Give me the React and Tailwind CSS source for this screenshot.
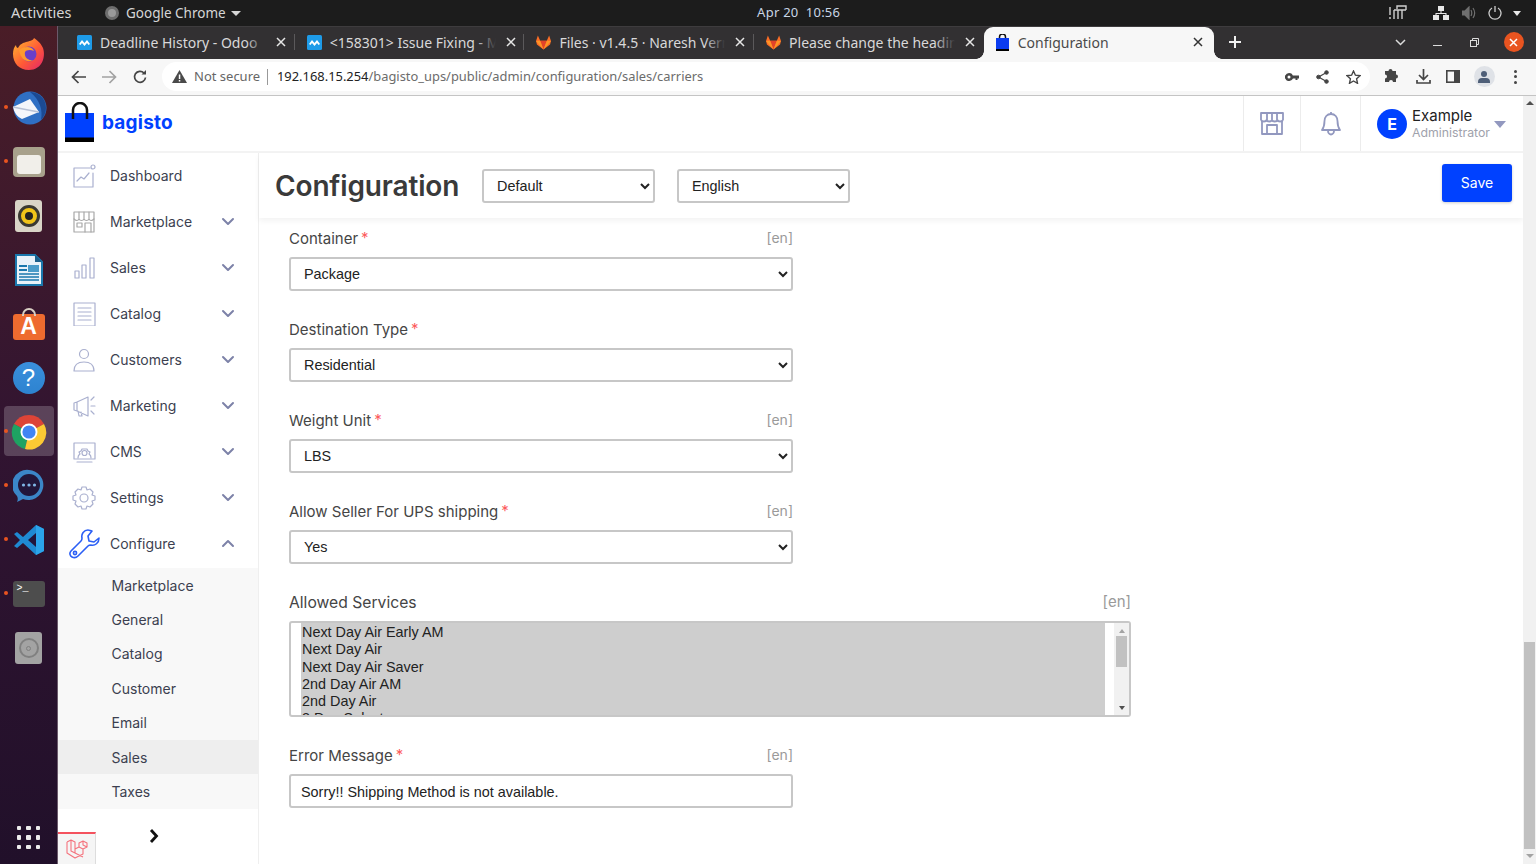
import React from "react";

// ───────────────────────────────────────────────────────────────────────────────
// small icons

const Chev = ({ up }) => (
  <svg width="14" height="9" viewBox="0 0 14 9" fill="none" stroke="#7d82a8" strokeWidth="2" strokeLinecap="round" strokeLinejoin="round">
    <path d={up ? "M2 7l5-5 5 5" : "M2 2l5 5 5-5"} />
  </svg>
);

const Side = ({ children, size = 24 }) => (
  <svg width={size} height={size} viewBox="0 0 24 24" fill="none" stroke="#aab0cf" strokeWidth="1.2" strokeLinejoin="round" strokeLinecap="round">
    {children}
  </svg>
);

const sideIcons = {
  Dashboard: (
    <Side>
      <path d="M18 4H2v19h19V9" />
      <circle cx="21" cy="3" r="2" />
      <path d="M5 17l4-4 3 2 5-6" />
    </Side>
  ),
  Marketplace: (
    <Side>
      <path d="M2 9V2h20v7M2 9v13h20V9" stroke="#a8a8a8" />
      <path d="M2 9c2 2 4 2 5 0 1 2 4 2 5 0 1 2 4 2 5 0 1 2 3 2 5 0M7 2v7M12 2v7M17 2v7" stroke="#a8a8a8" />
      <rect x="5" y="13" width="5" height="4" stroke="#a8a8a8" />
      <path d="M13 22v-9h6v9" stroke="#a8a8a8" />
    </Side>
  ),
  Sales: (
    <Side>
      <rect x="3" y="15" width="4" height="7" />
      <rect x="10" y="9" width="4" height="13" />
      <rect x="18" y="2" width="4" height="20" />
    </Side>
  ),
  Catalog: (
    <Side>
      <rect x="2" y="1" width="21" height="23" />
      <path d="M6 6h13M6 10h13M6 14h13M6 18h13" />
    </Side>
  ),
  Customers: (
    <Side>
      <circle cx="12" cy="6" r="4.5" />
      <path d="M2 23c0-6 4-9 10-9s10 3 10 9z" />
    </Side>
  ),
  Marketing: (
    <Side>
      <path d="M2 9v7l3 1V8zM5 8l11-5v19L5 17M6 17l1 5h3l-1-4" />
      <path d="M19 6l3-3M19 12h4M19 17l3 3" />
    </Side>
  ),
  CMS: (
    <Side>
      <rect x="2" y="3" width="21" height="16" />
      <circle cx="12.5" cy="13" r="2.5" />
      <path d="M6 18c0-3 1-3 2-4l-1-2 2-1 1-2h5l1 2 2 1-1 2c1 1 2 1 2 4M5 22h15" />
    </Side>
  ),
  Settings: (
    <Side>
      <circle cx="12" cy="12" r="4" />
      <path d="M10 1h4l1 3 3-1 3 3-1 3 3 1v4l-3 1 1 3-3 3-3-1-1 3h-4l-1-3-3 1-3-3 1-3-3-1v-4l3-1-1-3 3-3 3 1z" />
    </Side>
  ),
  Configure: (
    <svg width="31" height="30" viewBox="0 0 31 30" fill="none" stroke="#2b5ff5" strokeWidth="1.6" strokeLinejoin="round">
      <path d="M19 1c-4 0-7 4-6 8 0 1 0 2-1 3L2 22c-2 2-1 5 1 6s4 1 6-1l10-10c1-1 2-1 3-1 4 1 8-2 8-7l-5 4-5-1-1-5 4-5c-1 0-3-1-4-1z" />
      <circle cx="6" cy="24" r="1.6" />
    </svg>
  ),
};

// dock pictures, rough on purpose, they are about 36px on screen
const dockIcons = [
  <svg key="ff" width="34" height="34" viewBox="0 0 34 34">
    <defs>
      <linearGradient id="ffg" x1="0" y1="0" x2="1" y2="1"><stop offset="0" stopColor="#ffbd2e" /><stop offset=".55" stopColor="#ff5a36" /><stop offset="1" stopColor="#e3256b" /></linearGradient>
    </defs>
    <path d="M22 1c4 3 6 4 9 10 3 9-1 22-14 22C7 33 1 26 1 17c0-4 1-7 3-9 0 2 1 3 2 3 2-4 5-5 8-6 3-1 7-1 8-4z" fill="url(#ffg)" />
    <circle cx="17" cy="17" r="7.5" fill="#6a3fc8" />
    <path d="M7 13c5-4 13-4 15 1-4-2-8-1-9 1-1 4 2 9 8 8-5 3-12 1-14-10z" fill="#ff9a2e" />
  </svg>,
  <svg key="tb" width="36" height="34" viewBox="0 0 36 34">
    <circle cx="19" cy="17" r="16.5" fill="#2f6fc4" />
    <path d="M19 1c8 0 16 6 16 16 0 5-2 9-5 12 2-10-1-20-11-28z" fill="#1b4a94" />
    <path d="M2 16l17-8 9 13-17 7c-5-2-8-7-9-12z" fill="#f4f6fb" />
    <path d="M2 16l15 3 11 2" fill="none" stroke="#b8c2d6" strokeWidth="1.5" />
  </svg>,
  <div key="fl" className="w-[32px] h-[30px] rounded-[4px] bg-[#a8a18c] flex items-end justify-center pb-[3px]">
    <div className="w-[24px] h-[19px] rounded-[3px] bg-[#f1efea]"></div>
  </div>,
  <div key="rb" className="w-[27px] h-[32px] rounded-[3px] bg-[#d9d5c7] flex items-center justify-center">
    <div className="w-[22px] h-[22px] rounded-full bg-[#f0c419] border-[3px] border-[#3a3a32] flex items-center justify-center">
      <div className="w-[8px] h-[8px] rounded-full bg-[#222]"></div>
    </div>
  </div>,
  <svg key="wr" width="28" height="32" viewBox="0 0 28 32">
    <path d="M1 1h19l7 7v23H1z" fill="#e8f2f9" stroke="#1a78ad" strokeWidth="2" />
    <path d="M20 1l7 7h-7z" fill="#1a5f8a" />
    <rect x="4" y="11" width="8" height="2" fill="#1a78ad" />
    <rect x="4" y="15" width="8" height="2" fill="#1a78ad" />
    <rect x="13" y="11" width="11" height="7" fill="#4a9cc9" />
    <path d="M4 20h20M4 23h20M4 26h20" stroke="#1a78ad" strokeWidth="1.6" />
  </svg>,
  <div key="sw" className="relative w-[32px] h-[26px] mt-[5px] rounded-[3px] bg-[#ee6b2f] flex items-center justify-center">
    <div className="absolute -top-[6px] left-[9px] w-[14px] h-[8px] rounded-t-full border-2 border-b-0 border-[#d9d0c4]"></div>
    <span className="text-white font-bold text-[23px] leading-none [font-family:'Liberation_Sans',sans-serif]">A</span>
  </div>,
  <div key="hp" className="w-[32px] h-[32px] rounded-full bg-gradient-to-b from-[#3a8fdc] to-[#2d83d0] flex items-center justify-center text-white text-[24px] leading-none [font-family:'Liberation_Sans',sans-serif]">?</div>,
  <svg key="ch" width="36" height="36" viewBox="0 0 36 36">
    <path d="M18 18L3 10A17 17 0 0 1 33 10z" fill="#dd4437" />
    <path d="M18 18L3 10A17 17 0 0 0 14 35z" fill="#1ea362" />
    <path d="M18 18L33 10A17 17 0 0 1 14 35z" fill="#fcc934" />
    <circle cx="18" cy="18" r="8.5" fill="#fff" />
    <circle cx="18" cy="18" r="6.6" fill="#4285f4" />
  </svg>,
  <svg key="el" width="32" height="34" viewBox="0 0 32 34">
    <path d="M16 1a15 15 0 1 1-6 29l-6 3c1-2 1-4 0-6A15 15 0 0 1 16 1z" fill="#3b86c8" />
    <circle cx="16" cy="16" r="11" fill="#22163a" />
    <circle cx="10.5" cy="16" r="1.6" fill="#7fb6e6" />
    <circle cx="16" cy="16" r="1.6" fill="#7fb6e6" />
    <circle cx="21.5" cy="16" r="1.6" fill="#7fb6e6" />
  </svg>,
  <svg key="vs" width="32" height="32" viewBox="0 0 32 32">
    <path d="M23 1l8 4v22l-8 4-13-12-6 5-3-2 6-6-6-6 3-2 6 5z" fill="#1f8ad2" />
    <path d="M23 9l-8 7 8 7z" fill="#22163a" />
    <path d="M23 1l8 4v22l-8 4z" fill="#2ba4ea" />
  </svg>,
  <div key="tm" className="w-[32px] h-[26px] rounded-[3px] bg-[#4d4d4d] text-white text-[10px] leading-[12px] pl-[4px] pt-[2px] [font-family:'Liberation_Mono',monospace]">&gt;_</div>,
  <div key="dk" className="w-[27px] h-[32px] rounded-[3px] bg-[#a3a3a3] flex items-center justify-center">
    <div className="w-[20px] h-[20px] rounded-full border-2 border-[#808080] flex items-center justify-center">
      <div className="w-[5px] h-[5px] rounded-full border border-[#808080]"></div>
    </div>
  </div>,
];

const dockDots = [1, 2, 7, 8, 9, 10];

// ───────────────────────────────────────────────────────────────────────────────
// browser bits

const tabs = [
  { title: "Deadline History - Odoo", icon: "odoo" },
  { title: "<158301> Issue Fixing - Marketplace", icon: "odoo" },
  { title: "Files · v1.4.5 · Naresh Verma / bagisto", icon: "gitlab" },
  { title: "Please change the heading of the page", icon: "gitlab" },
];

const Favicon = ({ kind }) =>
  kind === "odoo" ? (
    <svg width="15" height="15" viewBox="0 0 15 15">
      <rect width="15" height="15" rx="1.5" fill="#1e9be8" />
      <path d="M2 9l3-4 2.5 3L10 5l3 4-1.5 1L10 8l-2.5 3L5 8l-1.5 2z" fill="#fff" />
    </svg>
  ) : (
    <svg width="15" height="15" viewBox="0 0 16 15">
      <path d="M8 15L1 9.5 0 6l2-6 2.5 5.500h7L14 0l2 6-1 3.500z" fill="#fc6d26" />
      <path d="M8 15L4.500 5.500h7z" fill="#e24329" />
      <path d="M8 15L0 6l4.500-.5zM8 15l8-9-4.500-.5z" fill="#fca326" opacity=".75" />
    </svg>
  );

const Tab = ({ title, icon, last }) => (
  <div className="w-[229.700px] h-full flex items-center pl-[12px] pb-[2px] relative">
    <Favicon kind={icon} />
    <div className="relative ml-[8px] w-[166px] overflow-hidden whitespace-nowrap text-[14px] text-[#d9d8d9]">
      {title}
      <div className="absolute right-0 top-0 bottom-0 w-[20px] bg-gradient-to-r from-transparent to-[#323032]"></div>
    </div>
    <svg className="ml-[10px]" width="10" height="10" viewBox="0 0 10 10" stroke="#e6e6e6" strokeWidth="1.500"><path d="M1 1l8 8M9 1l-8 8" /></svg>
    {!last && <div className="absolute right-0 top-[7px] bottom-[9px] w-px bg-[#5b595b]"></div>}
  </div>
);

const Tool = ({ children, w = 31 }) => (
  <div className="flex items-center justify-center shrink-0" style={{ width: w }}>{children}</div>
);

// ───────────────────────────────────────────────────────────────────────────────
// form bits

const fieldCls =
  "block w-[504px] h-[34px] bg-white border-2 border-[#c7c7c7] rounded-[3px] text-[14.400px] text-[#222] [font-family:'Liberation_Sans',sans-serif]";

const Label = ({ text, star, en, big }) => (
  <div className={`flex items-center justify-between h-[20px] mb-[9px] ${big ? "w-[842px]" : "w-[504px]"}`}>
    <span className={big ? "text-[15.700px] text-[#454545] mt-[2px]" : "text-[15px] text-[#454545] mt-[2px]"}>
      {text}
      {star && <span className="text-[#fc5c5c] ml-[3px] relative -top-[1px]">*</span>}
    </span>
    {en && <span className={big ? "text-[15px] text-[#9a9a9a] mt-[1px]" : "text-[14px] text-[#9a9a9a] mb-[2px]"}>[en]</span>}
  </div>
);

const SelectField = ({ label, value, en = true }) => (
  <div className="mb-[28px]">
    <Label text={label} star en={en} />
    <select className={`${fieldCls} pl-[9px]`} defaultValue={value}>
      <option>{value}</option>
    </select>
  </div>
);

const services = ["Next Day Air Early AM", "Next Day Air", "Next Day Air Saver", "2nd Day Air AM", "2nd Day Air", "3 Day Select"];

const menu = ["Dashboard", "Marketplace", "Sales", "Catalog", "Customers", "Marketing", "CMS", "Settings", "Configure"];
const submenu = ["Marketplace", "General", "Catalog", "Customer", "Email", "Sales", "Taxes"];

// ───────────────────────────────────────────────────────────────────────────────
// page

export default function App() {
  return (
    <div className="w-[1536px] h-[864px] overflow-hidden flex flex-col bg-white [font-family:Inter,sans-serif]">
      {/* gnome bar */}
      <div className="h-[26px] shrink-0 bg-[#1c1c1c] flex items-center text-[13.500px] text-[#d6d6d6] [font-family:'Noto_Sans',sans-serif]">
        <span className="ml-[11px] w-[94px] text-[14.500px]">Activities</span>
        <div className="w-[14px] h-[14px] rounded-full bg-[#9a9a9a] border-[3px] border-[#6e6e6e]"></div>
        <span className="ml-[7px]">Google Chrome</span>
        <span className="ml-[5px] w-0 h-0 border-x-[5px] border-x-transparent border-t-[5px] border-t-[#d6d6d6]"></span>
        <span className="ml-[513px] w-[90px] text-center text-[13px] tracking-[0.25px] text-[#c9d6e6]">Apr 20&nbsp; 10:56</span>
        <div className="ml-auto flex items-center text-[#d6d6d6]">
          <svg width="18" height="16" viewBox="0 0 18 16" fill="none" stroke="#cfcfcf" strokeWidth="1.400"><path d="M1 2v8M1 12v2M5 5h12M5 5v9M9 5v9M13 5v9M17 5V1H8v3" /></svg>
          <svg className="ml-[26px]" width="16" height="14" viewBox="0 0 16 14" fill="#e8e8e8"><rect x="5" y="0" width="6" height="5" /><rect x="0" y="9" width="6" height="5" /><rect x="10" y="9" width="6" height="5" /><path d="M7.500 5h1v2h5v2h-1V8h-9v1h-1V7h5z" /></svg>
          <svg className="ml-[13px]" width="14" height="14" viewBox="0 0 14 14" fill="none" stroke="#6f6f6f" strokeWidth="1.200"><path d="M0 5h3l4-4v12L3 9H0z" fill="#6f6f6f" /><path d="M9 4c1 2 1 4 0 6M11 2c2 3 2 7 0 10" /></svg>
          <svg className="ml-[12px]" width="14" height="14" viewBox="0 0 14 14" fill="none" stroke="#cfcfcf" strokeWidth="1.300"><path d="M7 0v6M4 2a6 6 0 1 0 6 0" /></svg>
          <span className="ml-[11px] mr-[15px] w-0 h-0 border-x-[4.500px] border-x-transparent border-t-[5px] border-t-[#e8e8e8]"></span>
        </div>
      </div>

      <div className="flex flex-1 min-h-0">
        {/* dock */}
        <div className="w-[58px] shrink-0 bg-gradient-to-b from-[#4a1d27] via-[#311431] to-[#21102a] flex flex-col pt-px border-r border-[#6b5a6b]">
          {dockIcons.map((ic, i) => (
            <div key={i} className="relative h-[54px] flex items-center justify-center">
              {i === 7 && <div className="absolute left-[4px] top-[1px] w-[50px] h-[50px] rounded-[4px] bg-white/20"></div>}
              {dockDots.includes(i) && <div className="absolute left-[4px] top-[24px] w-[4px] h-[4px] rounded-full bg-[#e95420]"></div>}
              <div className="relative">{ic}</div>
            </div>
          ))}
          <div className="mt-auto mb-[15px] mx-auto grid grid-cols-3 gap-[5px]">
            {[...Array(9)].map((_, i) => <div key={i} className="w-[4.500px] h-[4.500px] rounded-[1px] bg-[#ececec]"></div>)}
          </div>
        </div>

        {/* chrome window */}
        <div className="flex-1 min-w-0 flex flex-col">
          <div className="h-[33px] shrink-0 bg-[#323032] border-t border-[#3e3c3e] flex items-center pl-[7px] [font-family:'Noto_Sans',sans-serif]">
            {tabs.map((t, i) => <Tab key={i} {...t} last={i === 3} />)}
            <div className="relative w-[230px] h-full bg-[#f7f7f7] rounded-t-[9px] flex items-center pl-[12px] pb-[2px] text-[14px] text-[#4a4a4a]">
              <div className="absolute -left-[8px] bottom-0 w-[8px] h-[8px] bg-[radial-gradient(circle_at_0_0,#323032_7.500px,#f7f7f7_8px)]"></div>
              <div className="absolute -right-[8px] bottom-0 w-[8px] h-[8px] bg-[radial-gradient(circle_at_100%_0,#323032_7.500px,#f7f7f7_8px)]"></div>
              <svg width="13" height="17" viewBox="0 0 13 17">
                <path d="M3.500 5V3a3 3 0 0 1 6 0v2" fill="none" stroke="#111" strokeWidth="1.500" />
                <rect x="0" y="4" width="13" height="11" fill="#0b3cf0" />
                <rect x="0" y="15" width="13" height="2" fill="#000" />
              </svg>
              <span className="ml-[9px] w-[175px]">Configuration</span>
              <svg width="10" height="10" viewBox="0 0 10 10" stroke="#333" strokeWidth="1.500"><path d="M1 1l8 8M9 1l-8 8" /></svg>
            </div>
            <svg className="ml-[15px] mb-[2px]" width="12" height="12" viewBox="0 0 12 12" stroke="#f0f0f0" strokeWidth="2"><path d="M6 0v12M0 6h12" /></svg>
            <svg className="ml-[154px] mb-[2px]" width="11" height="7" viewBox="0 0 11 7" fill="none" stroke="#dcdcdc" strokeWidth="1.500"><path d="M1 1l4.500 4.500L10 1" /></svg>
            <div className="ml-[27px] w-[9px] h-[1.500px] mt-[5px] bg-[#dcdcdc]"></div>
            <svg className="ml-[28px] mb-[2px]" width="9" height="9" viewBox="0 0 9 9" fill="none" stroke="#dcdcdc" strokeWidth="1"><rect x=".5" y="2.500" width="6" height="6" /><path d="M2.500 2.500V.5h6v6h-2" /></svg>
            <div className="ml-[25px] mb-[2px] w-[20px] h-[20px] rounded-full bg-[#e95420] flex items-center justify-center">
              <svg width="9" height="9" viewBox="0 0 9 9" stroke="#fff" strokeWidth="1.500"><path d="M1 1l7 7M8 1L1 8" /></svg>
            </div>
          </div>

          {/* toolbar */}
          <div className="h-[37px] shrink-0 bg-[#f7f7f7] border-b border-[#c4c4c4] flex items-center pb-[1px] [font-family:'Noto_Sans',sans-serif]">
            <Tool w={5} />
            <Tool>
              <svg width="15" height="14" viewBox="0 0 15 14" fill="none" stroke="#454545" strokeWidth="1.700"><path d="M15 7H2M7.500 1L1.500 7l6 6" /></svg>
            </Tool>
            <Tool>
              <svg width="15" height="14" viewBox="0 0 15 14" fill="none" stroke="#a2a2a2" strokeWidth="1.700"><path d="M0 7h13M7.500 1l6 6-6 6" /></svg>
            </Tool>
            <Tool w={30}>
              <svg width="14" height="14" viewBox="0 0 14 14" fill="none" stroke="#454545" strokeWidth="1.700"><path d="M12.500 7.500A5.500 5.500 0 1 1 11 3" /><path d="M13 0v4.500H8.500z" fill="#454545" stroke="none" /></svg>
            </Tool>
            <div className="ml-[7px] w-[1208px] h-[29px] rounded-full bg-white flex items-center pl-[10px] text-[13px] shrink-0">
              <svg width="15" height="13" viewBox="0 0 15 13"><path d="M7.500 0L15 13H0z" fill="#4a4a4a" /><rect x="6.800" y="4.500" width="1.500" height="4.500" fill="#fff" /><rect x="6.800" y="10" width="1.500" height="1.500" fill="#fff" /></svg>
              <span className="ml-[7px] text-[#666] w-[66px] whitespace-nowrap">Not secure</span>
              <div className="ml-[7px] w-px h-[16px] bg-[#999]"></div>
              <span className="ml-[9px] text-[12.900px] text-[#222] whitespace-nowrap">192.168.15.254<span className="text-[#6c6c6c]">/bagisto_ups/public/admin/configuration/sales/carriers</span></span>
              <div className="ml-auto mr-[9px] flex items-center">
                <svg width="14" height="8" viewBox="0 0 14 8" fill="#454545"><path d="M4 0a4 4 0 1 1-3.700 5.500H0v-3h.300A4 4 0 0 1 4 0zm0 2.500a1.500 1.500 0 1 0 0 3 1.500 1.500 0 0 0 0-3z" /><path d="M7 2.500h7v3h-1.500V7h-2V5.500H7z" /></svg>
                <svg className="ml-[17px]" width="13" height="14" viewBox="0 0 13 14" fill="#454545" stroke="#454545"><circle cx="2.500" cy="7" r="1.800" /><circle cx="10.500" cy="2.500" r="1.800" /><circle cx="10.500" cy="11.500" r="1.800" /><path d="M2.500 7l8-4.500M2.500 7l8 4.500" strokeWidth="1.300" /></svg>
                <svg className="ml-[17px]" width="15" height="14" viewBox="0 0 15 14" fill="none" stroke="#454545" strokeWidth="1.400"><path d="M7.500 1l1.900 4.200 4.600.5-3.400 3.100.9 4.500-4-2.300-4 2.300.9-4.500L1 5.700l4.600-.5z" /></svg>
              </div>
            </div>
            <Tool w={44}>
              <svg width="15" height="15" viewBox="0 0 15 15" fill="#454545"><path d="M5.500 0a2 2 0 0 1 2 2h3.500v3.500a2 2 0 0 1 0 4V13H8a2 2 0 0 0-4 0H0V9.500a2 2 0 0 0 0-4V2h3.500a2 2 0 0 1 2-2z" /></svg>
            </Tool>
            <Tool w={19}>
              <svg width="15" height="15" viewBox="0 0 15 15" fill="none" stroke="#454545" strokeWidth="1.700"><path d="M7.500 0v10M3 6l4.500 4.500L12 6M1 11v3h13v-3" /></svg>
            </Tool>
            <Tool w={40}>
              <svg width="14" height="13" viewBox="0 0 14 13"><rect x=".8" y=".8" width="12.400" height="11.400" fill="none" stroke="#454545" strokeWidth="1.600" /><rect x="8" y="1" width="5" height="11" fill="#454545" /></svg>
            </Tool>
            <Tool w={22}>
              <div className="w-[21px] h-[21px] rounded-full bg-[#dfe2e7] flex flex-col items-center justify-center">
                <div className="w-[6px] h-[6px] rounded-full bg-[#4f5f78]"></div>
                <div className="w-[12px] h-[5px] mt-px rounded-t-[4px] bg-[#4f5f78]"></div>
              </div>
            </Tool>
            <Tool w={40}>
              <div className="flex flex-col gap-[2.500px]">
                <div className="w-[3px] h-[3px] rounded-full bg-[#454545]"></div>
                <div className="w-[3px] h-[3px] rounded-full bg-[#454545]"></div>
                <div className="w-[3px] h-[3px] rounded-full bg-[#454545]"></div>
              </div>
            </Tool>
          </div>

          {/* web page */}
          <div className="flex-1 min-h-0 flex">
            <div className="flex-1 min-w-0 flex flex-col">
              {/* site header */}
              <div className="h-[57px] shrink-0 flex items-center border-b-2 border-[#f3f3f3] pl-[7px]">
                <svg width="30" height="40" viewBox="0 0 30 40" className="mb-[4px]">
                  <path d="M8 16V8a7 7 0 0 1 14 0v8" fill="none" stroke="#111" strokeWidth="2.500" />
                  <rect x="0" y="11" width="29" height="29" fill="#0041ff" />
                  <rect x="0" y="35.500" width="29" height="4.500" fill="#000" />
                  <path d="M8 11v6M22 11v6" stroke="#111" strokeWidth="2.500" />
                </svg>
                <span className="ml-[7px] text-[19px] font-bold text-[#0041ff] tracking-[0.2px]">bagisto</span>
                <div className="ml-auto h-full flex items-stretch">
                  <div className="w-[57px] border-l border-[#ececec] flex items-center justify-center">
                    <svg width="24" height="23" viewBox="0 0 24 23" fill="none" stroke="#9298bf" strokeWidth="1.800" strokeLinejoin="round"><path d="M1 8V1h22v7M2 9v13h20V9" /><path d="M1 8c1 2 5 2 5.500 0 .5 2 5 2 5.500 0 .5 2 5 2 5.500 0 .5 2 4.500 2 5.500 0M7 1v7M12 1v7M17 1v7" /><path d="M7 22v-9h10v9" /></svg>
                  </div>
                  <div className="w-[60px] border-l border-[#ececec] flex items-center justify-center">
                    <svg width="20" height="25" viewBox="0 0 20 25" fill="none" stroke="#9298bf" strokeWidth="1.800" strokeLinejoin="round"><path d="M10 3c-4 0-6.500 3-6.500 7 0 5-1 7-2.500 9h18c-1.500-2-2.500-4-2.500-9 0-4-2.500-7-6.500-7zM10 1v2M7 20c0 2 1.500 3.500 3 3.500s3-1.500 3-3.500" /></svg>
                  </div>
                  <div className="w-[163px] border-l border-[#ececec] flex items-center pl-[16px]">
                    <div className="w-[30px] h-[30px] rounded-full bg-[#0041ff] text-white font-bold text-[16px] flex items-center justify-center">E</div>
                    <div className="ml-[5px] leading-none">
                      <div className="text-[15px] text-[#222]">Example</div>
                      <div className="mt-[4px] text-[12.300px] text-[#a0a2ac]">Administrator</div>
                    </div>
                    <span className="ml-[4px] mt-[2px] w-0 h-0 border-x-[6.500px] border-x-transparent border-t-[7px] border-t-[#9298bf]"></span>
                  </div>
                </div>
              </div>

              <div className="flex-1 min-h-0 flex">
                {/* sidebar */}
                <div className="w-[201px] shrink-0 border-r border-[#efefef] flex flex-col">
                  {menu.map((m) => (
                    <div key={m} className="h-[46px] shrink-0 flex items-center relative text-[14px] text-[#3c3f50]">
                      <div className="w-[52px] flex items-center justify-center">{sideIcons[m]}</div>
                      <span className="mb-[1px]">{m}</span>
                      {m !== "Dashboard" && (
                        <div className="ml-auto mr-[23px] mb-[2px]"><Chev up={m === "Configure"} /></div>
                      )}
                    </div>
                  ))}
                  <div className="mt-px bg-[#f8f8f8]">
                    {submenu.map((s) => (
                      <div key={s} className={`h-[34.400px] flex items-center pl-[53.500px] text-[14px] text-[#3c3f50] ${s === "Sales" ? "bg-[#eeeeee]" : ""}`}>{s}</div>
                    ))}
                  </div>
                  <div className="mt-auto h-[54px] flex items-end">
                    <div className="w-[38px] h-[32px] bg-[#f5f5f5] border-t-2 border-[#f4525e] border-r border-r-[#dddddd] flex items-center justify-center">
                      <svg width="22" height="22" viewBox="0 0 22 22" fill="none" stroke="#f4727c" strokeWidth="1.100" strokeLinejoin="round"><path d="M1 4l4-2 4 2v11l8 4M1 4v11l8 5 8-4v-5l4-2V5l-4-2-4 2v4l-4 2V4M5 2v11l4 2M13 9l4 2M17 3v4l4 2" /></svg>
                    </div>
                    <div className="flex-1 h-[32px] pl-[53px]">
                      <svg className="-mt-[3px]" width="10" height="14" viewBox="0 0 10 14" fill="none" stroke="#111" strokeWidth="2.800"><path d="M2 1l5.500 6L2 13" /></svg>
                    </div>
                  </div>
                </div>

                {/* content */}
                <div className="flex-1 min-w-0 flex flex-col">
                  <div className="h-[65px] shrink-0 flex items-center pl-[16px] shadow-[0_3px_6px_rgba(0,0,0,0.05)]">
                    <h1 className="w-[207px] text-[28px] font-semibold text-[#3a3a3a] tracking-[-0.15px]">Configuration</h1>
                    <select className="w-[173px] h-[34px] bg-white border-2 border-[#c7c7c7] rounded-[3px] text-[14.400px] text-[#222] pl-[9px] [font-family:'Liberation_Sans',sans-serif]">
                      <option>Default</option>
                    </select>
                    <select className="ml-[22px] w-[173px] h-[34px] bg-white border-2 border-[#c7c7c7] rounded-[3px] text-[14.400px] text-[#222] pl-[9px] [font-family:'Liberation_Sans',sans-serif]">
                      <option>English</option>
                    </select>
                    <button type="button" className="ml-auto mr-[11px] mb-[5px] w-[70px] h-[38px] pb-[2px] rounded-[3px] bg-[#0041ff] text-white text-[14px] shadow-[0_1px_3px_rgba(0,0,0,0.2)]">Save</button>
                  </div>

                  <div className="pt-[10px] pl-[30px]">
                    <SelectField label="Container" value="Package" />
                    <SelectField label="Destination Type" value="Residential" en={false} />
                    <SelectField label="Weight Unit" value="LBS" />
                    <SelectField label="Allow Seller For UPS shipping" value="Yes" />

                    <div className="mb-[28px]">
                      <Label text="Allowed Services" en big />
                      <div className="w-[842px] h-[96px] border-2 border-[#c7c7c7] rounded-[3px] flex overflow-hidden text-[14.400px] leading-[17.300px] text-[#222] [font-family:'Liberation_Sans',sans-serif]">
                        <div className="ml-[10px] w-[804px] shrink-0 h-full overflow-hidden bg-[#cecece] pl-px pt-px">
                          {services.map((s) => <div key={s} className="whitespace-nowrap">{s}</div>)}
                        </div>
                        <div className="ml-auto w-[15px] h-full bg-[#f1f1f1] flex flex-col items-center">
                          <span className="mt-[6px] w-0 h-0 border-x-[3.500px] border-x-transparent border-b-[4px] border-b-[#a3a3a3]"></span>
                          <div className="mt-[3px] w-[11px] h-[31px] bg-[#c1c1c1]"></div>
                          <span className="mt-auto mb-[5px] w-0 h-0 border-x-[3.500px] border-x-transparent border-t-[4px] border-t-[#505050]"></span>
                        </div>
                      </div>
                    </div>

                    <div>
                      <Label text="Error Message" star en />
                      <input className={`${fieldCls} pl-[10px] pt-px outline-none`} defaultValue="Sorry!! Shipping Method is not available." readOnly />
                    </div>
                  </div>
                </div>
              </div>
            </div>

            {/* page scrollbar */}
            <div className="w-[13px] shrink-0 bg-[#f1f1f1] flex flex-col items-center">
              <span className="mt-[5px] w-0 h-0 border-x-[4px] border-x-transparent border-b-[4px] border-b-[#505050]"></span>
              <div className="mt-auto w-[11px] h-[207px] bg-[#c1c1c1]"></div>
              <span className="mt-[5px] mb-[6px] w-0 h-0 border-x-[4px] border-x-transparent border-t-[4px] border-t-[#a3a3a3]"></span>
            </div>
          </div>
        </div>
      </div>
    </div>
  );
}
